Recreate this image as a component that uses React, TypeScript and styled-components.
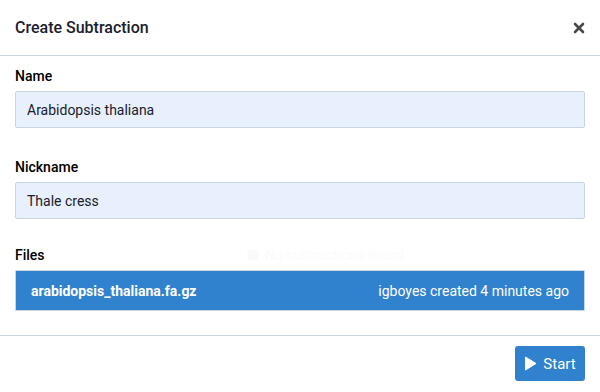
import React from "react";
import styled, { createGlobalStyle } from "styled-components";

const Global = createGlobalStyle`
  html, body { margin: 0; padding: 0; background: #ffffff; }
  body { font-family: Roboto, "Liberation Sans", sans-serif; color: #1a202c; }
  * { box-sizing: border-box; }
`;

const Modal = styled.div`
  width: 600px;
  height: 392px;
  background: #ffffff;
  display: flex;
  flex-direction: column;
`;

const Header = styled.div`
  height: 56px;
  border-bottom: 1px solid #cbd5e0;
  display: flex;
  align-items: center;
  justify-content: space-between;
  padding: 0 14px 0 15px;
`;

const Title = styled.h2`
  margin: 0;
  font-size: 16px;
  font-weight: 500;
  color: #1a202c;
`;

const Close = styled.button`
  border: 0;
  background: none;
  padding: 0;
  width: 14px;
  height: 14px;
  display: flex;
  align-items: center;
  justify-content: center;
  color: #4a4a4a;
  cursor: pointer;
`;

const Body = styled.div`
  padding: 10px 15px 24px;
  border-bottom: 1px solid #cbd5e0;
`;

const Group = styled.div<{ $gap: number }>`
  margin-bottom: ${(p) => p.$gap}px;
`;

const LabelRow = styled.div`
  position: relative;
  height: 20px;
  margin-bottom: 5px;
  display: flex;
  align-items: center;
`;

const Label = styled.label`
  font-size: 14px;
  font-weight: 500;
  line-height: 20px;
  color: #000;
`;

const Ghost = styled.div`
  position: absolute;
  left: 232px;
  top: 2px;
  display: flex;
  align-items: center;
  gap: 6px;
  font-size: 14px;
  color: #fbfbfb;
`;

const GhostDot = styled.span`
  width: 12px;
  height: 12px;
  border-radius: 50%;
  background: #fafafa;
`;

const Input = styled.input`
  display: block;
  width: 100%;
  height: 37px;
  padding: 0 11px;
  border: 1px solid #cbd5e0;
  border-radius: 2px;
  background: #e8f0fe;
  font-family: Roboto, "Liberation Sans", sans-serif;
  font-size: 14px;
  color: #1a202c;
  outline: none;
`;

const FileItem = styled.div`
  height: 41px;
  background: #3182ce;
  border: 1px solid #cbd5e0;
  border-radius: 1px;
  display: flex;
  align-items: center;
  justify-content: space-between;
  padding: 0 15px;
  color: #ffffff;
  font-size: 14px;
`;

const FileName = styled.strong`
  font-weight: 700;
`;

const Footer = styled.div`
  flex: 1;
  display: flex;
  justify-content: flex-end;
  align-items: flex-start;
  padding: 10px 15px;
`;

const Button = styled.button`
  height: 35px;
  width: 70px;
  display: flex;
  align-items: center;
  justify-content: center;
  gap: 6px;
  background: #3182ce;
  border: 0;
  border-radius: 3px;
  color: #ffffff;
  font-family: Roboto, "Liberation Sans", sans-serif;
  font-size: 15px;
  cursor: pointer;
`;

export default function App() {
  return (
    <>
      <Global />
      <Modal>
        <Header>
          <Title>Create Subtraction</Title>
          <Close aria-label="close">
            <svg width="12" height="12" viewBox="0 0 12 12">
              <path d="M2 2 L10 10 M10 2 L2 10" stroke="currentColor" strokeWidth="2.6" strokeLinecap="round" />
            </svg>
          </Close>
        </Header>
        <Body>
          <Group $gap={29}>
            <LabelRow>
              <Label>Name</Label>
            </LabelRow>
            <Input defaultValue="Arabidopsis thaliana" />
          </Group>
          <Group $gap={26}>
            <LabelRow>
              <Label>Nickname</Label>
            </LabelRow>
            <Input defaultValue="Thale cress" />
          </Group>
          <Group $gap={0}>
            <LabelRow>
              <Label>Files</Label>
              <Ghost>
                <GhostDot />
                No subtractions found
              </Ghost>
            </LabelRow>
            <FileItem>
              <FileName>arabidopsis_thaliana.fa.gz</FileName>
              <span>igboyes created 4 minutes ago</span>
            </FileItem>
          </Group>
        </Body>
        <Footer>
          <Button>
            <svg width="13" height="15" viewBox="0 0 13 15">
              <path d="M1.5 1 L12 7.5 L1.5 14 Z" fill="#ffffff" stroke="#ffffff" strokeWidth="1" strokeLinejoin="round" />
            </svg>
            Start
          </Button>
        </Footer>
      </Modal>
    </>
  );
}
